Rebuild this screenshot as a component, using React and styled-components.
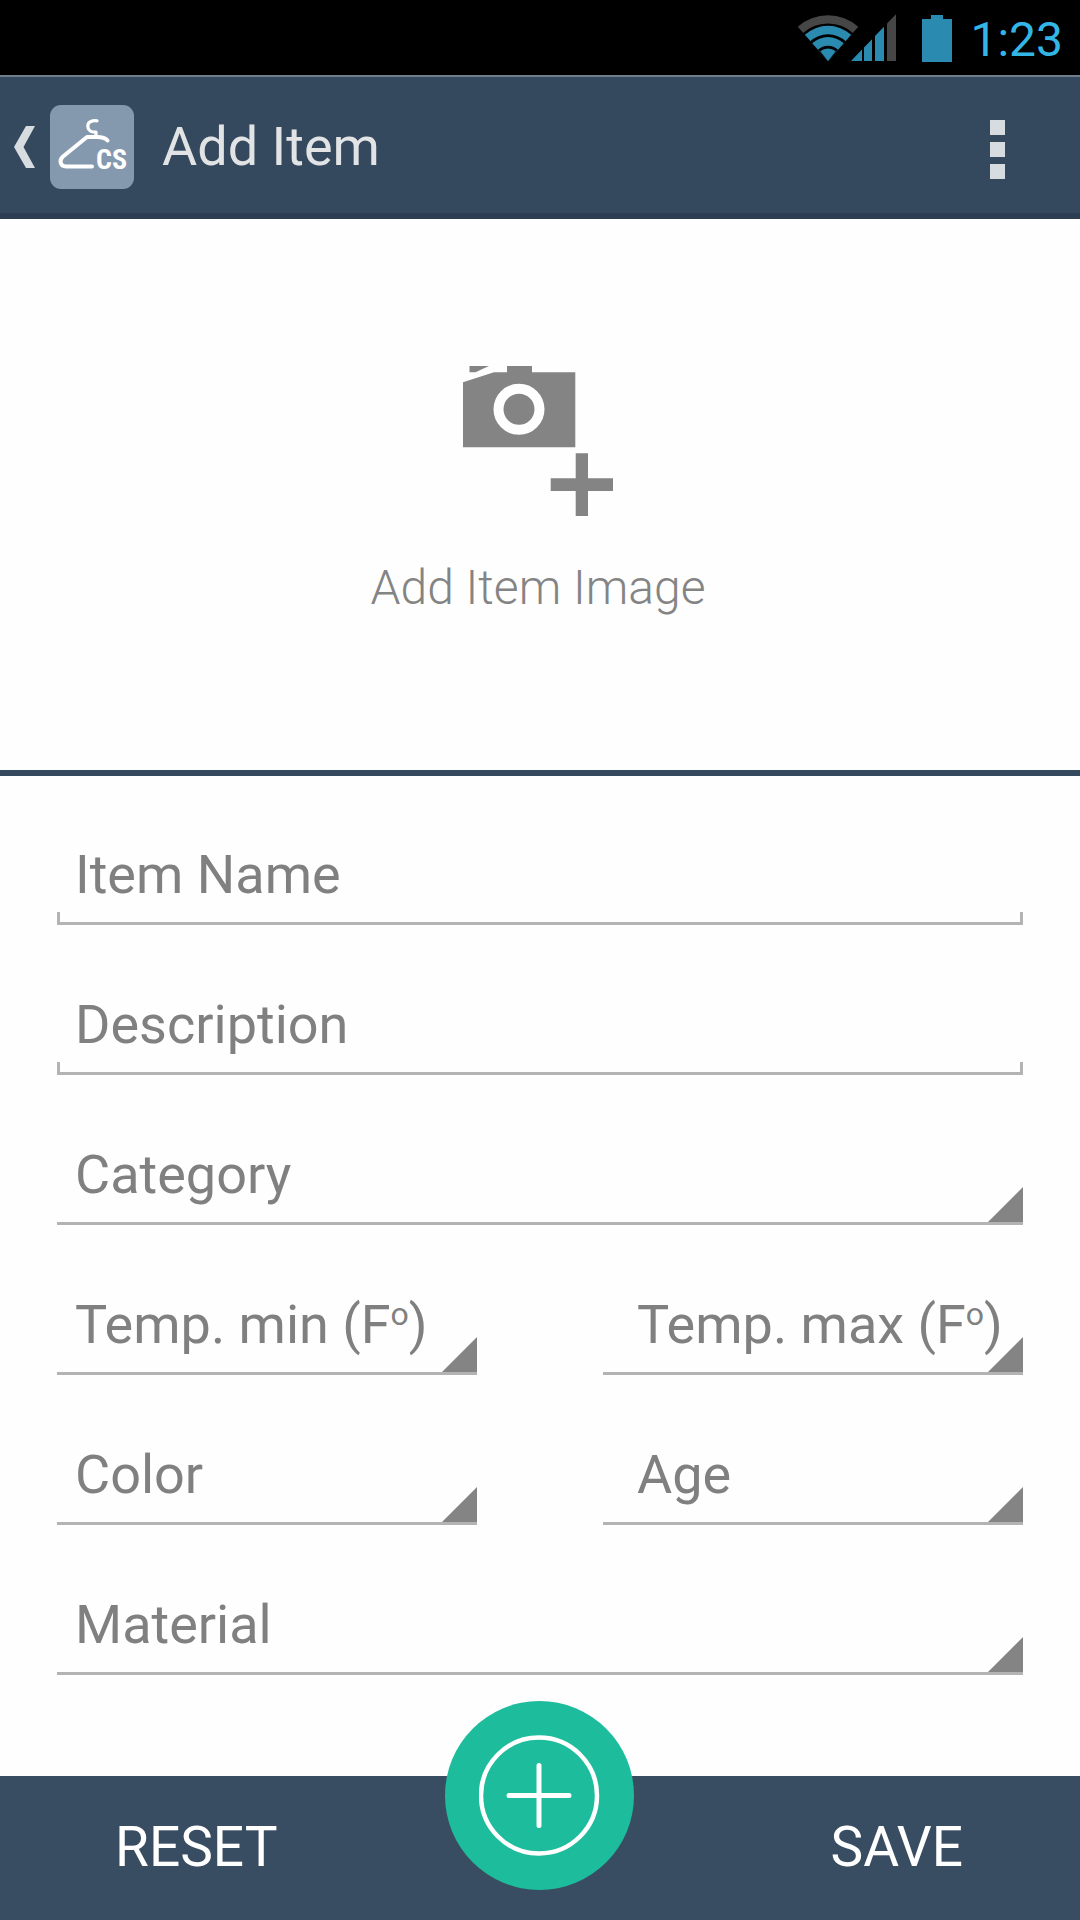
import React from "react";
import styled, { createGlobalStyle } from "styled-components";

const GlobalStyle = createGlobalStyle`
  *, *::before, *::after { box-sizing: border-box; }
  body {
    margin: 0;
    background: #fefefe;
    font-family: Roboto, "Noto Sans", sans-serif;
  }
  button, input, select {
    margin: 0;
    padding: 0;
    border: 0;
    border-radius: 0;
    background: none;
    font: inherit;
    color: inherit;
  }
  button { cursor: pointer; }
  svg { display: block; flex: none; }
`;

const Page = styled.div`
  display: flex;
  flex-direction: column;
  min-height: 100vh;
`;

const StatusBar = styled.div`
  display: flex;
  align-items: center;
  justify-content: flex-end;
  height: 75px;
  padding-right: 17px;
  background: #000;
`;

const NetworkIcon = styled.svg`
  margin-right: 25px;
`;

const BatteryIcon = styled.svg`
  margin-right: 18px;
`;

const Clock = styled.time`
  padding-top: 4px;
  color: #33b5e5;
  font-size: 48px;
  line-height: 64px;
`;

const AppBar = styled.header`
  display: flex;
  align-items: center;
  height: 144px;
  padding: 4px 60px 0 14px;
  border-top: 2px solid #6f7d8d;
  border-bottom: 6px solid #2d3e52;
  background: #34495e;
`;

const UpButton = styled.button`
  display: flex;
  align-items: center;
  gap: 15px;
`;

const Title = styled.h1`
  flex: 1;
  margin: 0 0 0 28px;
  color: #e1e3e5;
  font-size: 54px;
  font-weight: 400;
  line-height: 64px;
`;

const OverflowButton = styled.button`
  display: flex;
  flex-direction: column;
  align-items: center;
  gap: 7px;
  width: 45px;
  padding-top: 4px;
`;

const OverflowDot = styled.span`
  width: 15px;
  height: 15px;
  background: #d6dce0;
`;

const ImagePanel = styled.section`
  display: flex;
  justify-content: center;
  border-bottom: 6px solid #34495e;
`;

const ImageButton = styled.button`
  display: flex;
  flex-direction: column;
  align-items: center;
  gap: 44px;
  padding: 147px 4px 154px 0;
  color: #848484;
  font-size: 48px;
  font-weight: 300;
  line-height: 56px;
`;

const Form = styled.form`
  display: flex;
  flex: 1;
  flex-direction: column;
`;

const Fields = styled.div`
  display: grid;
  grid-template-columns: 1fr 1fr;
  gap: 53px 126px;
  padding: 52px 57px 101px;
`;

const Field = styled.div`
  position: relative;
  display: grid;
  grid-template-columns: minmax(0, 1fr);
  grid-template-rows: 94px;
  align-items: center;
  grid-column: ${(p) => (p.$half ? "auto" : "1 / -1")};
  border-bottom: 3px solid #b3b3b3;
  color: #808080;
  font-size: 54px;
  line-height: 64px;
`;

const Label = styled.label`
  grid-area: 1 / 1;
  justify-self: start;
  margin-left: ${(p) => (p.$indent ? "34px" : "18px")};
  white-space: nowrap;
  pointer-events: none;
`;

const Degree = styled.sup`
  font-size: 32px;
  line-height: 0;
  vertical-align: 18px;
`;

const TextField = styled(Field)`
  &::before,
  &::after {
    content: "";
    position: absolute;
    bottom: 0;
    width: 3px;
    height: 10px;
    background: #b3b3b3;
  }
  &::before { left: 0; }
  &::after { right: 0; }
  &:has(input:not(:placeholder-shown)) label { visibility: hidden; }
`;

const SelectField = styled(Field)`
  &::after {
    content: "";
    position: absolute;
    right: 0;
    bottom: 0;
    width: 35px;
    height: 35px;
    background: #848484;
    clip-path: polygon(100% 0, 100% 100%, 0 100%);
    pointer-events: none;
  }
`;

const Input = styled.input`
  grid-area: 1 / 1;
  width: 100%;
  height: 100%;
  padding: 0 18px;
  outline: none;
`;

const Select = styled.select`
  grid-area: 1 / 1;
  width: 100%;
  height: 100%;
  appearance: none;
  outline: none;
`;

const ActionBar = styled.footer`
  display: grid;
  grid-template-columns: 1fr 189px 1fr;
  grid-template-rows: 144px;
  margin-top: auto;
  padding-right: 2px;
  background: #394d62;
`;

const ActionButton = styled.button`
  padding: ${(p) => (p.$end ? "0 0 2px 82px" : "0 52px 2px 0")};
  color: #fff;
  font-size: 55px;
  line-height: 64px;
`;

const AddButton = styled.button`
  display: grid;
  place-items: center;
  width: 189px;
  height: 189px;
  margin-top: -75px;
  border-radius: 50%;
  background: #1dbc9c;
`;

function Network() {
  return (
    <NetworkIcon width="99" height="48" viewBox="18 13 99 48" role="img" aria-label="Wi-Fi and mobile signal">
      <path d="M48 60L17.7 25.7A45.7 45.7 0 0 1 78.3 25.7Z" fill="#464646" />
      <path d="M48 60L22.5 32.6A37.2 37.2 0 0 1 73.5 32.6Z" fill="#000" />
      <path d="M48 60L24.8 33.8A34.5 34.5 0 0 1 71.2 33.8Z" fill="#2a8ab0" />
      <path d="M48 60L30 40.5A26 26 0 0 1 66 40.5Z" fill="#000" />
      <path d="M48 60L32.2 42.2A23.5 23.5 0 0 1 63.8 42.2Z" fill="#2a8ab0" />
      <path d="M48 60L38 48.7A14.8 14.8 0 0 1 58 48.7Z" fill="#000" />
      <path d="M48 60L40.3 50.3A12 12 0 0 1 55.7 50.3Z" fill="#2a8ab0" />
      <path d="M71 60L82 48.6V60ZM84 60V46.5L92 38.2V60ZM95 60V35L104 25.7V60Z" fill="#2a8ab0" />
      <path d="M107 60V22.5L116 13.2V60Z" fill="#464646" />
    </NetworkIcon>
  );
}

function Battery() {
  return (
    <BatteryIcon width="30" height="48" viewBox="0 0 30 48" role="img" aria-label="Battery full">
      <path d="M9 1H21V5H30V48H0V5H9Z" fill="#2a8ab0" />
    </BatteryIcon>
  );
}

function Chevron() {
  return (
    <svg width="21" height="42" viewBox="0 0 21 42" aria-hidden="true">
      <path d="M12 0H21L9.5 21L21 42H12L0 21Z" fill="#d6dce0" />
    </svg>
  );
}

function Logo() {
  return (
    <svg width="84" height="84" viewBox="0 0 84 84" aria-hidden="true">
      <rect width="84" height="84" rx="11" fill="#8599ae" />
      <g fill="none" stroke="#fff" strokeLinecap="round" strokeLinejoin="round">
        <path d="M47 15.8C42 15.2 37.8 17 37.8 21C37.8 24 40 26.6 43 27H46V31" strokeWidth="3.2" />
        <path d="M57.5 35.5C55 32.6 51.5 32 47 32H37L13 51.5C8.5 55.5 10.5 61.5 16 61.5H42" strokeWidth="4" />
      </g>
      <text
        x="46"
        y="64"
        fill="#fff"
        fontFamily="'Liberation Sans Narrow', 'Roboto Condensed', Roboto, sans-serif"
        fontSize="28"
        fontWeight="700"
      >
        CS
      </text>
    </svg>
  );
}

function CameraPlus() {
  return (
    <svg width="150" height="150" viewBox="0 0 150 150" fill="#848484" aria-hidden="true">
      <path d="M6.5 0H26L12.5 6.3H6.5Z" />
      <path d="M0 16.3L31 6.3H44V0H69V6.3H112.3V81.3H0Z" />
      <circle cx="56" cy="43.3" r="20.5" stroke="#fefefe" strokeWidth="10" />
      <path d="M112.7 87.3H125V112.3H150V125H125V150H112.7V125H87.7V112.3H112.7Z" />
    </svg>
  );
}

function CirclePlus() {
  return (
    <svg width="121" height="121" viewBox="0 0 121 121" fill="none" stroke="#fff" aria-hidden="true">
      <circle cx="60" cy="60.5" r="58" strokeWidth="4.5" />
      <path d="M60 30.5V90.5M30 60.5H90" strokeWidth="5" strokeLinecap="round" />
    </svg>
  );
}

function TextEntry({ id, label }) {
  return (
    <TextField>
      <Input id={id} name={id} type="text" placeholder=" " />
      <Label htmlFor={id}>{label}</Label>
    </TextField>
  );
}

function Picker({ id, half, indent, children }) {
  return (
    <SelectField $half={half}>
      <Select id={id} name={id} defaultValue="">
        <option value="" />
      </Select>
      <Label htmlFor={id} $indent={indent}>
        {children}
      </Label>
    </SelectField>
  );
}

export default function App() {
  return (
    <>
      <GlobalStyle />
      <Page>
        <StatusBar>
          <Network />
          <Battery />
          <Clock>1:23</Clock>
        </StatusBar>
        <AppBar>
          <UpButton type="button" aria-label="Back">
            <Chevron />
            <Logo />
          </UpButton>
          <Title>Add Item</Title>
          <OverflowButton type="button" aria-label="More options">
            <OverflowDot />
            <OverflowDot />
            <OverflowDot />
          </OverflowButton>
        </AppBar>
        <ImagePanel>
          <ImageButton type="button">
            <CameraPlus />
            Add Item Image
          </ImageButton>
        </ImagePanel>
        <Form onSubmit={(e) => e.preventDefault()}>
          <Fields>
            <TextEntry id="name" label="Item Name" />
            <TextEntry id="description" label="Description" />
            <Picker id="category">Category</Picker>
            <Picker id="temp-min" half>
              Temp. min (F<Degree>o</Degree>)
            </Picker>
            <Picker id="temp-max" half indent>
              Temp. max (F<Degree>o</Degree>)
            </Picker>
            <Picker id="color" half>
              Color
            </Picker>
            <Picker id="age" half indent>
              Age
            </Picker>
            <Picker id="material">Material</Picker>
          </Fields>
          <ActionBar>
            <ActionButton type="reset">RESET</ActionButton>
            <AddButton type="button" aria-label="Add">
              <CirclePlus />
            </AddButton>
            <ActionButton type="submit" $end>
              SAVE
            </ActionButton>
          </ActionBar>
        </Form>
      </Page>
    </>
  );
}
